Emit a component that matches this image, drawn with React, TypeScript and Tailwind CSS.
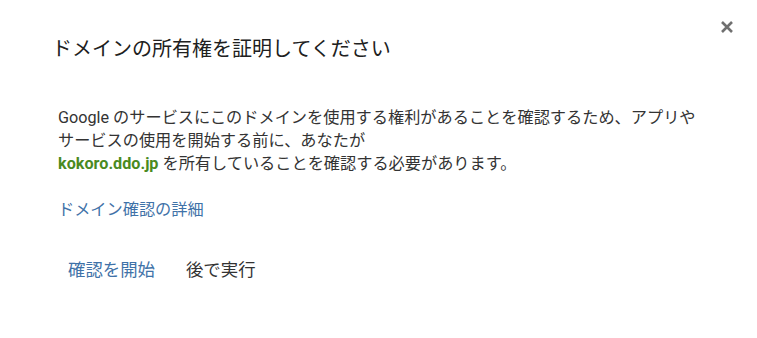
export default function App() {
  return (
    <div
      className="relative w-[757px] h-[338px] bg-white overflow-hidden"
      style={{ fontFamily: 'Roboto, "Noto Sans CJK JP", sans-serif' }}
    >
      <button className="absolute top-[20px] right-[23px] w-[14px] h-[14px] flex items-center justify-center">
        <svg viewBox="0 0 14 14" width="14" height="14">
          <path d="M2 2 L12 12 M12 2 L2 12" stroke="#707070" strokeWidth="2.6" strokeLinecap="butt" />
        </svg>
      </button>

      <div className="pl-[52px] pt-[36px]">
        <h2 className="text-[20px] leading-[26px] text-[#202020] font-normal">
          ドメインの所有権を証明してください
        </h2>
      </div>

      <div className="pl-[58px] pr-[30px] pt-[45px]">
        <p className="text-[16.2px] leading-[22.8px] text-[#333333]">
          Google のサービスにこのドメインを使用する権利があることを確認するため、アプリや
          <br />
          サービスの使用を開始する前に、あなたが
          <br />
          <span className="font-bold text-[#4a8a1f]">kokoro.ddo.jp</span>{" "}
          を所有していることを確認する必要があります。
        </p>

        <a className="block mt-[24px] text-[16.2px] leading-[22px] text-[#3f72a8]">
          ドメイン確認の詳細
        </a>

        <div className="flex items-center gap-[31px] mt-[37px] pl-[10px]">
          <button className="text-[17.4px] leading-[24px] text-[#3f72a8]">確認を開始</button>
          <button className="text-[17.4px] leading-[24px] text-[#333333]">後で実行</button>
        </div>
      </div>
    </div>
  );
}
